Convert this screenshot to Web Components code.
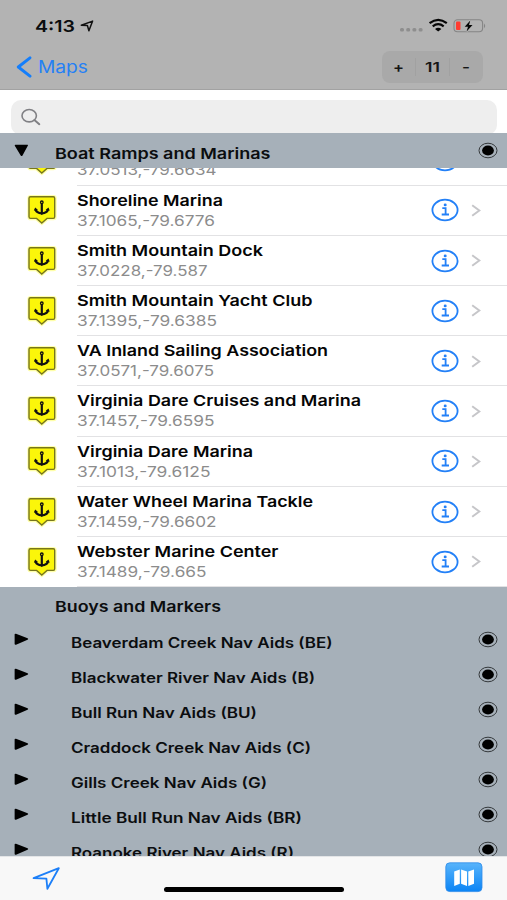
<!DOCTYPE html>
<html lang="en">
<head>
<meta charset="utf-8">
<title>Maps</title>
<style>
  html, body { margin: 0; height: 100%; overflow: hidden; }
  body { font-family: Inter, "Liberation Sans", sans-serif; background: #fff; color: #0b0d0f; }
</style>
</head>
<body>
<maps-screen></maps-screen>

<script>
// text that is stretched horizontally to a given width
class FitText extends HTMLElement {
  constructor() {
    super();
    this.attachShadow({ mode: 'open' });
  }
  connectedCallback() {
    const width = Number(this.getAttribute('width'));
    this.shadowRoot.innerHTML = `
      <style>
        :host { display: block; width: ${width}px; white-space: nowrap; }
        span { display: inline-block; transform-origin: 0 50%; }
      </style>
      <span><slot></slot></span>`;
    const span = this.shadowRoot.querySelector('span');
    const fit = () => {
      span.style.transform = 'none';
      const natural = span.getBoundingClientRect().width;
      if (natural) span.style.transform = `scaleX(${width / natural})`;
    };
    fit();
    requestAnimationFrame(fit);
  }
}
customElements.define('fit-text', FitText);

class StatusBar extends HTMLElement {
  constructor() {
    super();
    this.attachShadow({ mode: 'open' }).innerHTML = `
      <style>
        :host { display: flex; align-items: center; height: 50px; padding: 1px 20px 0 34.5px; box-sizing: border-box; }
        fit-text { font-size: 16.5px; font-weight: 600; line-height: 20px; }
        .arrow { margin-left: 5px; }
        .right { margin-left: auto; display: flex; align-items: center; }
        svg { display: block; }
      </style>
      <fit-text width="40">4:13</fit-text>
      <svg class="arrow" width="14" height="12" viewBox="0 0 14 12"><path d="M1.3 5.2 12.6 1.1 8.9 10.7 7.4 5.5Z" fill="none" stroke="#111" stroke-width="1.5" stroke-linejoin="round"/></svg>
      <div class="right">
        <svg width="87" height="16" viewBox="0 0 87 16">
          <g fill="#8e8e8e"><rect x="0" y="10" width="4" height="3.6" rx="1.5"/><rect x="6.2" y="10" width="4" height="3.6" rx="1.5"/><rect x="12.4" y="10" width="4" height="3.6" rx="1.5"/><rect x="18.6" y="10" width="4" height="3.6" rx="1.5"/></g>
          <g fill="none" stroke="#050505" stroke-width="2.2"><path d="M29.6 5.1Q38.2-1.5 46.8 5.1"/><path d="M32.7 8.3Q38.2 4.1 43.7 8.3"/></g>
          <path d="M35 11Q38.2 8.6 41.4 11L38.2 13.6Z" fill="#050505"/>
          <rect x="54" y="1.8" width="28.6" height="12" rx="3.5" fill="none" stroke="#858585" stroke-width="1.1"/>
          <rect x="56" y="3.6" width="4.5" height="8.4" rx="1" fill="#ff3b30"/>
          <path d="M84 5.4Q86.4 7.8 84 10.2Z" fill="#858585"/>
          <path d="M70.3 2.4 64.7 8.8H68L66.6 13.5 72.5 7H69Z" fill="#050505" stroke="#b3b3b3" stroke-width="1.8" paint-order="stroke"/>
        </svg>
      </div>`;
  }
}
customElements.define('status-bar', StatusBar);

class NavBar extends HTMLElement {
  constructor() {
    super();
    this.attachShadow({ mode: 'open' }).innerHTML = `
      <style>
        :host { display: flex; align-items: center; height: 40px; padding: 0 24.5px 6px 16px; box-sizing: border-box; }
        .back { display: flex; align-items: center; gap: 5.5px; color: #2580f5; font-size: 17px; line-height: 22px; }
        .stepper { margin-left: auto; display: flex; align-items: center; width: 101px; height: 32px; border-radius: 8px; background: #a9a9a9; font-size: 13.5px; font-weight: 600; color: #161616; }
        .stepper div { flex: 1; height: 18px; line-height: 18px; display: flex; justify-content: center; border-right: 1px solid #a1a1a1; }
        .stepper div:last-child { border: 0; }
        svg { display: block; }
      </style>
      <div class="back">
        <svg width="16" height="22" viewBox="0 0 16 22"><path d="M14 1.8 2.3 11 14 20.2" fill="none" stroke="#147efb" stroke-width="2.9" stroke-linecap="round" stroke-linejoin="round"/></svg>
        <fit-text width="50">Maps</fit-text>
      </div>
      <div class="stepper">
        <div><fit-text width="11">+</fit-text></div>
        <div><fit-text width="15">11</fit-text></div>
        <div><fit-text width="8">-</fit-text></div>
      </div>`;
  }
}
customElements.define('nav-bar', NavBar);

class SearchField extends HTMLElement {
  constructor() {
    super();
    this.attachShadow({ mode: 'open' }).innerHTML = `
      <style>
        :host { display: block; height: 43.3px; padding: 9.5px 10px 0 11px; box-sizing: border-box; background: #fff; }
        div { height: 35px; box-sizing: border-box; border-radius: 10px; background: #eee; padding: 8px 8.5px; }
        svg { display: block; }
      </style>
      <div><svg width="22" height="18" viewBox="0 0 22 18"><ellipse cx="9.2" cy="7.7" rx="7.2" ry="6.2" fill="none" stroke="#808084" stroke-width="1.6"/><path d="M14.4 12.1 19.3 16.2" stroke="#808084" stroke-width="2" stroke-linecap="round"/></svg></div>`;
  }
}
customElements.define('search-field', SearchField);

// grey row of the outline: open | closed | none, level 0 or 1
class GroupRow extends HTMLElement {
  constructor() {
    super();
    this.attachShadow({ mode: 'open' });
  }
  connectedCallback() {
    const state = this.getAttribute('state');
    const level = this.getAttribute('level') ?? '0';
    const width = this.getAttribute('width');
    const marks = {
      open: 'M1.5 .8H13.5Q14.4 .8 13.8 1.8L8.5 11.5Q7.6 12.6 6.7 11.5L.8 1.8Q.4 .8 1.5 .8Z',
      closed: 'M.6 1.8Q.6 .4 2 .7L13.6 5.2Q14.9 6 13.6 6.8L2 11.7Q.6 12.1 .6 10.6Z'
    };
    const mark = marks[state] ? `<svg width="16" height="13" viewBox="0 0 16 13"><path d="${marks[state]}"/></svg>` : '';
    const radio = marks[state] ? `<svg class="radio" width="20" height="17" viewBox="0 0 20 17"><ellipse cx="10" cy="8.5" rx="9" ry="7.3" fill="none" stroke="#35393c" stroke-width="1"/><ellipse cx="10" cy="8.5" rx="5.9" ry="5.1"/></svg>` : '';
    this.shadowRoot.innerHTML = `
      <style>
        :host { display: flex; align-items: center; flex: none; height: 35.1px; box-sizing: border-box; background: #a6b0b9; padding: 0 9px 0 14.2px; }
        .mark { width: ${level === '1' ? 56.6 : 40.5}px; }
        .mark, .radio { position: relative; top: -.5px; }
        fit-text { padding-top: 5.6px; font-size: ${level === '1' ? 14 : 14.8}px; font-weight: 600; line-height: 20px; }
        .radio { margin-left: auto; }
        svg { display: block; }
      </style>
      <div class="mark">${mark}</div>
      <fit-text width="${width}"><slot></slot></fit-text>
      ${radio}`;
  }
}
customElements.define('group-row', GroupRow);

class PlaceRow extends HTMLElement {
  constructor() {
    super();
    this.attachShadow({ mode: 'open' });
  }
  connectedCallback() {
    const [nameWidth, coordsWidth] = this.getAttribute('widths').split(' ');
    this.shadowRoot.innerHTML = `
      <style>
        :host { display: flex; flex: none; height: 50.2px; padding-left: 27px; box-sizing: border-box; background: #fff; }
        .pin { width: 49.5px; padding-top: 9.8px; box-sizing: border-box; }
        .cell { flex: 1; display: flex; border-bottom: 1px solid #e2e2e4; padding-right: 26.4px; }
        .text { flex: 1; padding-top: 5px; }
        .name { font-size: 15.2px; font-weight: 600; line-height: 20px; color: #050505; }
        .coords { font-size: 14.2px; line-height: 20px; color: #8c8c8c; }
        .info { margin: 12.8px 12px 0 0; }
        .chevron { margin-top: 18.5px; }
        svg { display: block; }
      </style>
      <div class="pin"><svg width="30" height="31" viewBox="0 0 30 31">
        <path d="M3.5 1.5H26.5Q28.2 1.5 28.2 3.2V22Q28.2 23.8 26.5 23.8H20.3L14.8 28.5 9.3 23.8H3.5Q1.8 23.8 1.8 22V3.2Q1.8 1.5 3.5 1.5Z" fill="#fbf60a" stroke="#ffffa8" stroke-width="3"/>
        <path d="M3.5 1.8H26.3Q27.7 1.8 27.7 3.2V21.8Q27.7 23.4 26.3 23.4H20L14.8 28 9.6 23.4H3.6Q2 23.4 2 21.8V3.2Q2 1.8 3.5 1.8Z" fill="#fbf60a" stroke="#77761d" stroke-width="1.4"/>
        <circle cx="14.8" cy="7.3" r="1.3" fill="none" stroke="#111" stroke-width="1.3"/>
        <path d="M14.8 8.3V18" fill="none" stroke="#111" stroke-width="2.2"/>
        <path d="M8.5 14.2Q9.5 18.1 14.8 18.3 20.1 18.1 21.1 14.2" fill="none" stroke="#111" stroke-width="2.3"/>
        <path d="M6.9 15.8 8.1 12.6 10.9 14.8ZM22.7 15.8 21.5 12.6 18.7 14.8ZM12.6 18H17L14.8 20.1Z" fill="#111"/>
      </svg></div>
      <div class="cell">
        <div class="text">
          <fit-text class="name" width="${nameWidth}"><slot name="name"></slot></fit-text>
          <fit-text class="coords" width="${coordsWidth}"><slot name="coords"></slot></fit-text>
        </div>
        <svg class="info" width="28" height="24" viewBox="0 0 28 24"><g fill="none" stroke="#2380f7"><ellipse cx="14" cy="12" rx="12.6" ry="10.3" stroke-width="1.8"/><path d="M11.3 10.1H14.6V16.4M10.7 16.5H18" stroke-width="1.8"/></g><ellipse cx="14.2" cy="6.9" rx="1.5" ry="1.3" fill="#2380f7"/></svg>
        <svg class="chevron" width="10" height="13" viewBox="0 0 10 13"><path d="M1.2 1.2 8.3 6.5 1.2 11.8" fill="none" stroke="#c6c6c9" stroke-width="2"/></svg>
      </div>`;
  }
}
customElements.define('place-row', PlaceRow);

class ToolBar extends HTMLElement {
  constructor() {
    super();
    this.attachShadow({ mode: 'open' }).innerHTML = `
      <style>
        :host { display: grid; grid-template-columns: 1fr 180px 1fr; flex: none; height: 44px; box-sizing: border-box; padding: 0 24px 0 32px; background: #f8f8f8; border-top: 1px solid #e3e5e7; }
        .locate { margin-top: 9px; }
        .home { height: 5px; border-radius: 3px; background: #000; align-self: end; margin: 0 4px 8px -4px; width: 180px; }
        .map { justify-self: end; margin-top: 5px; }
        svg { display: block; }
      </style>
      <svg class="locate" width="29" height="25" viewBox="0 0 29 25"><path d="M1.6 12.2 26.8 2.2 15.4 22.8 14.4 12.7Z" fill="none" stroke="#1c7ff8" stroke-width="1.8" stroke-linejoin="round"/></svg>
      <div class="home"></div>
      <svg class="map" width="38" height="31" viewBox="0 0 38 31">
        <defs><linearGradient id="blue" x2="0" y2="1"><stop stop-color="#58b4fb"/><stop offset="1" stop-color="#0b84f5"/></linearGradient></defs>
        <rect x=".8" y=".8" width="36.2" height="28.8" rx="4" fill="url(#blue)" stroke="#2e8bea" stroke-width=".8"/>
        <path d="M9.2 9.6 14.8 7.4V21.7L9.2 23.9ZM16.1 7.4 22 9.6V23.9L16.1 21.7ZM23.3 9.6 29 7.4V21.7L23.3 23.9Z" fill="#fff"/>
      </svg>`;
  }
}
customElements.define('tool-bar', ToolBar);

const places = [
  ['Shoreline Marina', '37.1065,-79.6776', '146 138'],
  ['Smith Mountain Dock', '37.0228,-79.587', '186 130.5'],
  ['Smith Mountain Yacht Club', '37.1395,-79.6385', '235.5 140'],
  ['VA Inland Sailing Association', '37.0571,-79.6075', '251 137'],
  ['Virginia Dare Cruises and Marina', '37.1457,-79.6595', '284 137.5'],
  ['Virginia Dare Marina', '37.1013,-79.6125', '176 133.5'],
  ['Water Wheel Marina Tackle', '37.1459,-79.6602', '236 139.5'],
  ['Webster Marine Center', '37.1489,-79.665', '201.5 129.5']
];

const groups = [
  ['Beaverdam Creek Nav Aids (BE)', 261.5],
  ['Blackwater River Nav Aids (B)', 244],
  ['Bull Run Nav Aids (BU)', 186],
  ['Craddock Creek Nav Aids (C)', 240],
  ['Gills Creek Nav Aids (G)', 196],
  ['Little Bull Run Nav Aids (BR)', 231],
  ['Roanoke River Nav Aids (R)', 223]
];

const placeRow = ([name, coords, widths]) => `
  <place-row widths="${widths}"><span slot="name">${name}</span><span slot="coords">${coords}</span></place-row>`;

const groupRow = ([name, width]) => `
  <group-row state="closed" level="1" width="${width}">${name}</group-row>`;

class MapsScreen extends HTMLElement {
  constructor() {
    super();
    this.attachShadow({ mode: 'open' }).innerHTML = `
      <style>
        :host { display: flex; flex-direction: column; width: 507px; height: 900px; overflow: hidden; }
        header { flex: none; height: 90px; box-sizing: border-box; background: #b3b3b3; border-bottom: 1px solid #a2a2a2; }
        .list { flex: 1; min-height: 0; overflow: hidden; display: flex; flex-direction: column; }
        /* the first row is scrolled half under the section header */
        .cut { flex: none; height: 17.2px; overflow: hidden; display: flex; flex-direction: column; justify-content: flex-end; }
      </style>
      <header><status-bar></status-bar><nav-bar></nav-bar></header>
      <search-field></search-field>
      <group-row state="open" width="215.5">Boat Ramps and Marinas</group-row>
      <div class="list">
        <div class="cut"><place-row widths="0 139.5"><span slot="coords">37.0513,-79.6634</span></place-row></div>
        ${places.map(placeRow).join('')}
        <group-row state="none" width="166">Buoys and Markers</group-row>
        ${groups.map(groupRow).join('')}
      </div>
      <tool-bar></tool-bar>`;
  }
}
customElements.define('maps-screen', MapsScreen);
</script>
</body>
</html>
